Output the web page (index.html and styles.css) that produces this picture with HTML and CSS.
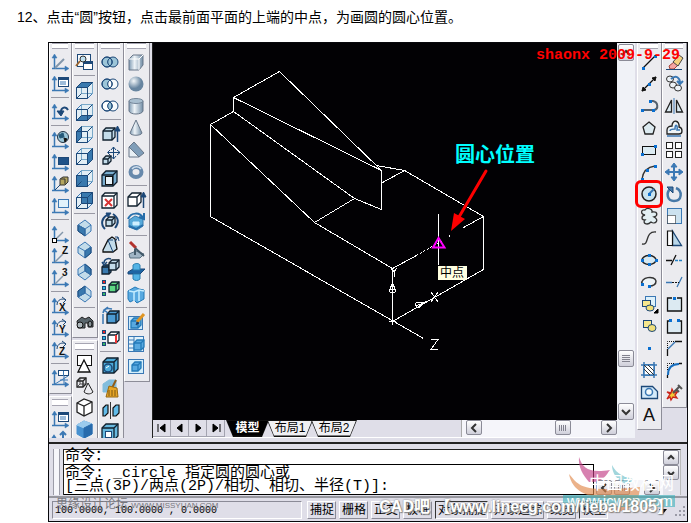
FILE: index.html
```html
<!DOCTYPE html>
<html lang="zh-CN">
<head>
<meta charset="utf-8">
<title>CAD 教程</title>
<link rel="stylesheet" href="styles.css">
</head>
<body>
<p class="step">12、点击“圆”按钮，点击最前面平面的上端的中点，为画圆的圆心位置。</p>
<main class="window">
  <div class="workspace">
    <div class="dock dock-left">
      <div class="dock-col" data-bars="ucs | ucsdialog"></div>
      <div class="dock-col" data-bars="views | shade"></div>
      <div class="dock-col" data-bars="solidedit"></div>
      <div class="dock-col" data-bars="solids"></div>
    </div>
    <div class="document">
      <svg class="drawing" viewBox="153 43 464 377" role="img" aria-label="三维模型">
        <g class="edges">
          <path d="M279.500 71.500L233.500 97.500V111.500L210.500 124.500V216.500L423.500 338.500M279.500 71.500L381.500 170.500L233.500 97.500M381.500 170.500V209.500L354.500 198.500L233.500 111.500M354.500 198.500L314.500 222.500M210.500 124.500L314.500 222.500L392.500 268.500V324.500M376.500 165.500L404.500 170.500L483.500 216.500V269.500L392.500 321.500M404.500 170.500L382.500 182.500M392.500 268.500L416.500 255.500M463.500 227.500L483.500 216.500"/>
          <path stroke-dasharray="2 2" d="M416.500 255.500L444.500 239.500"/>
          <path d="M438.500 214V265M449 235v2M391 268l3 4 3-4M394.500 272v5M431 292l7 10M438 292l-7 10M431 339.500h7l-7 10h7"/>
          <path d="M392.500 283l-3 7c0 4 6 4 6 0ZM390 289h6M425 302l-9 1c-2 4 3 6 5 3ZM416 306l7-3M389 321.500h7"/>
        </g>
        <path class="snap" d="M438.500 238L433 247.500H444.500Z"/>
        <path class="pointer" d="M486 171L459 217"/>
        <path class="pointer-head" d="M451 231L454 213L465 219Z"/>
        <text class="note" x="455" y="162">圆心位置</text>
        <rect class="tip" x="438" y="266" width="29" height="14"/>
        <text class="tip-text" x="440" y="277">中点</text>
      </svg>
      <div class="sheetbar">
        <div class="pager">
          <button aria-label="第一个"><svg viewBox="0 0 12 10"><path d="M2 1v8M9 1v8L4 5Z"/></svg></button>
          <button aria-label="上一个"><svg viewBox="0 0 12 10"><path d="M8 1v8L3 5Z"/></svg></button>
          <button aria-label="下一个"><svg viewBox="0 0 12 10"><path d="M4 1v8L9 5Z"/></svg></button>
          <button aria-label="最后一个"><svg viewBox="0 0 12 10"><path d="M10 1v8M3 1v8L8 5Z"/></svg></button>
        </div>
        <div class="tabs">
          <button class="tab active"><span>模型</span></button>
          <button class="tab"><span>布局1</span></button>
          <button class="tab"><span>布局2</span></button>
        </div>
        <div class="scroll-h">
          <button class="sb" aria-label="向左"><svg viewBox="0 0 10 10"><path d="M7 1L3 5l4 4"/></svg></button>
          <span class="track"></span>
          <button class="sb" aria-label="水平滑块"><svg viewBox="0 0 10 10"><path class="ridge" d="M1.500 2v6M3.500 2v6M5.500 2v6M7.500 2v6"/></svg></button>
          <span class="track track-end"></span>
          <button class="sb" aria-label="向右"><svg viewBox="0 0 10 10"><path d="M3 1l4 4-4 4"/></svg></button>
        </div>
      </div>
    </div>
    <div class="scroll-v">
      <button class="sb" aria-label="向上"><svg viewBox="0 0 10 10"><path d="M1 7l4-4 4 4"/></svg></button>
      <span class="track"></span>
      <button class="sb" aria-label="垂直滑块"><svg viewBox="0 0 10 10"><path class="ridge" d="M1 1.500h8M1 3.500h8M1 5.500h8M1 7.500h8"/></svg></button>
      <span class="track track-end"></span>
      <button class="sb" aria-label="向下"><svg viewBox="0 0 10 10"><path d="M1 3l4 4 4-4"/></svg></button>
    </div>
    <div class="dock dock-right">
      <div class="dock-col" data-bars="draw"></div>
      <div class="dock-col" data-bars="modify"></div>
    </div>
  </div>
  <section class="command">
    <div class="grip-v"></div>
    <div class="console">
      <div class="history">命令：</div>
      <textarea class="prompt" aria-label="命令行" spellcheck="false">命令: _circle 指定圆的圆心或
[三点(3P)/两点(2P)/相切、相切、半径(T)]:</textarea>
      <div class="scroll-h console-h">
        <button class="sb" aria-label="命令行向左"><svg viewBox="0 0 10 10"><path d="M7 1L3 5l4 4"/></svg></button>
        <button class="sb" aria-label="命令行滑块"><svg viewBox="0 0 10 10"><path class="ridge" d="M1.500 2v6M3.500 2v6M5.500 2v6M7.500 2v6"/></svg></button>
        <span class="track"></span>
        <button class="sb" aria-label="命令行向右"><svg viewBox="0 0 10 10"><path d="M3 1l4 4-4 4"/></svg></button>
      </div>
      <div class="console-v">
        <button class="sb" aria-label="命令行向上"><svg viewBox="0 0 10 10"><path d="M2 6l3-3 3 3"/></svg></button>
        <button class="sb" aria-label="命令行向下"><svg viewBox="0 0 10 10"><path d="M2 4l3 3 3-3"/></svg></button>
      </div>
    </div>
  </section>
  <footer class="status">
    <div class="coords">100.0000, 100.0000 , 0.0000</div>
    <button class="mode">捕捉</button>
    <button class="mode">栅格</button>
    <button class="mode">正交</button>
    <button class="mode">极轴</button>
    <button class="mode on">对象捕捉</button>
    <button class="mode">对象追踪</button>
    <button class="mode">线宽</button>
    <button class="mode on">模型</button>
    <svg class="corner" viewBox="0 0 28 20"><path d="M1 9h8l-4 5Z"/><path class="dots" d="M25 7h2M21 11h2M25 11h2M17 15h2M21 15h2M25 15h2"/></svg>
  </footer>
  <span class="stamp">shaonx 2009-9-29</span>
  <div class="mark-site">
    <svg viewBox="0 0 118 62">
      <path fill="#c23d86" fill-opacity=".65" d="M16 2C20 14 26 18 47 15C43 20 40 28 26 27C20 20 15 12 16 2Z"/>
      <path fill="#62bac4" fill-opacity=".6" d="M49 10C54 20 61 21 70 24C68 29 65 30 61 28C54 25 49 18 49 10Z"/>
      <path fill="#e0894c" fill-opacity=".65" d="M6 19C16 30 16 38 77 32C76 48 70 56 45 58C58 51 62 46 42 43C24 42 9 36 6 19Z"/>
      <path fill="#3bb2ba" fill-opacity=".6" d="M0 40H112V52H0Z"/>
      <text class="mark-cn" x="26" y="34">中国教程网</text>
      <text class="mark-url" x="4" y="51">www.jcwcn.com</text>
    </svg>
  </div>
  <span class="mark-forum">思缘设计论坛 <small>WWW.MISSYUAN.COM</small></span>
  <span class="mark-bar">CAD吧 【www.linecg.com/tieba/1805】</span>
</main>
<script src="toolbars.js"></script>
</body>
</html>
```
FILE: styles.css
```css
* { box-sizing: border-box; }
body {
  margin: 0;
  background: #fff;
  color: #000;
  font: 12px "Liberation Sans", "Noto Sans CJK SC", sans-serif;
}
button {
  font: inherit;
  color: inherit;
  padding: 0;
  border: 0;
  background: none;
}
svg { display: block; }
.step {
  margin: 0;
  padding: 8px 17px 16px;
  font-size: 14px;
  line-height: 18px;
}
.window {
  position: relative;
  margin: 0 3px 0 48px;
  border: 1px solid #08080c;
  background: #dfdee8;
}
.workspace { display: flex; }

/* docked toolbars */
.dock { display: flex; }
.dock-left { padding-right: 2px; border-right: 1px solid #222; }
.dock-right { padding-left: 2px; }
.dock-col {
  width: 26px;
  height: 0;
  min-height: 100%;
  overflow: hidden;
}
.dock-left .dock-col:first-child { width: 23px; }
.dock-right .dock-col { width: 25px; overflow: visible; }
.toolbar {
  padding: 0 1px 4px 0;
  border: solid;
  border-width: 0 1px 1px;
  border-color: #fff #8d8d98 #8d8d98 #fff;
  background: #ebebef;
}
.toolbar + .toolbar { margin-top: 2px; border-top-width: 1px; }
.toolbar::before {
  content: "";
  display: block;
  height: 4px;
  margin: 0 2px 2px;
  border: solid #a6a5b2;
  border-width: 1px 0;
  background: #fff;
}
.toolbar + .toolbar::before { margin: 2px 2px; height: 5px; }
.tool {
  position: relative;
  display: block;
  width: 22px;
  height: 22px;
}
.dock-col:first-child .tool { margin-left: -1px; }
.dock-right .dock-col:first-child .tool { margin-left: 0; }
.tool svg { width: 22px; height: 22px; }
.tool.marked::after {
  content: "";
  position: absolute;
  inset: -3px;
  border: 3px solid #f00;
  border-radius: 6px;
}
.rule {
  height: 1px;
  margin: 2px 1px 3px;
  border: 0;
  background: #9999a4;
}

/* model view */
.document { flex: 1; min-width: 0; }
.drawing { width: 100%; background: #020104; }
.edges { fill: none; stroke: #fff; shape-rendering: crispEdges; }
.snap { fill: none; stroke: #f0f; stroke-width: 2; }
.pointer { stroke: #f00; stroke-width: 3; stroke-linecap: round; }
.pointer-head { fill: #f00; }
.note { fill: #0ff; font-size: 20px; font-weight: bold; }
.tip { fill: #ffffe1; }
.tip-text { font-size: 12px; }
.sheetbar {
  display: flex;
  height: 18px;
  border-bottom: 1px solid #fff;
}
.pager { display: flex; }
.pager button {
  width: 18px;
  border-right: 1px solid #a3a3af;
  border-bottom: 1px solid #a3a3af;
}
.pager svg { width: 12px; height: 10px; margin: 0 auto; stroke: #000; }
.tabs { display: flex; flex: 1; padding-left: 1px; }
.tab {
  width: 46px;
  margin-right: -2px;
  background: #111;
  line-height: 15px;
  clip-path: polygon(0 0, 100% 0, calc(100% - 7px) 100%, 7px 100%);
}
.tab span {
  display: block;
  height: 15px;
  margin: 0 1px 1px;
  background: #f0f0f3;
  clip-path: polygon(0 0, 100% 0, calc(100% - 6px) 100%, 6px 100%);
}
.tab.active { width: 43px; color: #fff; font-weight: bold; }
.tab.active span { background: #000; }

/* scroll bars */
.sb {
  display: grid;
  place-items: center;
  flex: none;
  width: 16px;
  height: 15px;
  border: 1px solid #8b8b97;
  border-radius: 2px;
  background: linear-gradient(#fff, #cfcfda);
}
.sb svg { width: 10px; height: 10px; fill: none; stroke: #333; stroke-width: 2; }
.sb .ridge { stroke: #82828e; stroke-width: 1; }
.track { flex: 1; }
.scroll-h { display: flex; background: #f5f5fa; }
.sheetbar .scroll-h { width: 156px; padding-left: 4px; border-left: 1px solid #aaa; }
.sheetbar .track-end { flex: none; width: 30px; }
.scroll-v {
  display: flex;
  flex-direction: column;
  width: 18px;
  padding: 1px 1px 18px;
  background: #f0f2f7;
}
.scroll-v .sb { height: 17px; }
.scroll-v .track-end { flex: none; height: 36px; }

/* command line */
.command {
  display: flex;
  gap: 3px;
  margin-top: 4px;
  padding: 5px 6px 1px 4px;
  border-top: 2px solid #222;
  border-bottom: 2px solid #96969e;
}
.grip-v {
  width: 7px;
  border: solid #9c9ca8;
  border-width: 0 1px;
  background: #f6f6fa;
}
.console {
  flex: 1;
  display: grid;
  grid-template-columns: 1fr 69px 17px;
  grid-template-rows: 15px 30px;
  border: 1px solid #222;
  border-right-color: #bbb;
  border-bottom: 0;
  background: #fff;
  font: 15px/14px "Liberation Mono", "Noto Sans CJK SC", monospace;
}
.history, .prompt {
  grid-column: 1;
  padding: 0 1px;
  border: 0 solid #000;
  border-bottom-width: 1px;
}
.prompt {
  display: block;
  width: 100%;
  height: 30px;
  margin: 0;
  padding-top: 2px;
  border-right-width: 1px;
  border-radius: 0;
  overflow: hidden;
  resize: none;
  outline: 0;
  background: #fff;
  color: #000;
  font: 15px/13px "Liberation Mono", "Noto Sans CJK SC", monospace;
}
.console-h { grid-column: 2; grid-row: 2; align-self: end; padding: 0 3px 0 2px; gap: 2px; }
.console-v { grid-column: 3; grid-row: 1 / 3; background: #e4e4ec; }

/* status bar */
.status {
  display: flex;
  align-items: center;
  gap: 3px;
  height: 23px;
  padding: 0 1px 0 3px;
}
.coords {
  flex: 0 0 250px;
  height: 18px;
  margin-right: 2px;
  padding: 0 2px;
  border: 1px solid;
  border-color: #8b8b97 #fff #fff #8b8b97;
  font: 10px/18px "Liberation Mono", monospace;
}
.mode {
  height: 18px;
  padding: 0 1px 0 2px;
  border: 1px solid;
  border-color: #fff #8b8b97 #8b8b97 #fff;
  line-height: 16px;
  white-space: nowrap;
}
.mode.on { border-color: #333 #fff #fff #333; }
.corner { width: 28px; height: 20px; margin-left: auto; }
.dots { stroke: #9a9aa6; stroke-width: 2; }

/* stamps laid over the window */
.stamp, .mark-site, .mark-forum, .mark-bar {
  position: absolute;
  pointer-events: none;
  white-space: nowrap;
}
.stamp {
  top: 4px;
  right: 7px;
  color: #f00;
  font: bold 15px/18px "Liberation Mono", monospace;
}
.mark-site { right: 6px; bottom: 4px; }
.mark-site svg { width: 118px; height: 62px; overflow: visible; }
.mark-cn { fill: #fff; font-size: 17px; }
.mark-url { fill: #fff; font-size: 15px; }
.mark-forum {
  left: 7px;
  bottom: 6px;
  color: #77777d;
  font-size: 12px;
  line-height: 18px;
}
.mark-forum small { font-size: 8px; }
.mark-bar {
  right: 14px;
  bottom: 4px;
  color: #fff;
  font-size: 16px;
  font-weight: bold;
  line-height: 20px;
  text-shadow: 0 0 2px #777, 1px 1px 1px #888;
}
```
FILE: toolbars.js
```js
// Icon fragments are drawn on a 22 x 22 grid.
const NAVY = '#1c4878', BLUE = '#3b78b4', PALE = '#c3dcea', SKY = '#58a9e0';

const p = (d, fill = 'none', stroke = NAVY, w = 1) =>
  `<path d="${d}" fill="${fill}" stroke="${stroke}" stroke-width="${w}"/>`;
const sq = (x, y, w, h, fill = '#fff', stroke = NAVY) =>
  `<rect x="${x}" y="${y}" width="${w}" height="${h}" fill="${fill}" stroke="${stroke}"/>`;
const dot = (x, y) => `<rect x="${x - 1}" y="${y - 1}" width="3" height="3" fill="#0a6fd0"/>`;
const ring = (x, y, rx, ry, fill = 'none', stroke = NAVY, w = 1) =>
  `<ellipse cx="${x}" cy="${y}" rx="${rx}" ry="${ry}" fill="${fill}" stroke="${stroke}" stroke-width="${w}"/>`;
const word = (x, y, s, size = 10, fill = '#111') =>
  `<text x="${x}" y="${y}" font-size="${size}" font-weight="bold" fill="${fill}">${s}</text>`;

const axes = p('M5.5 18V5M3 17.500H17', 'none', BLUE, 1.5) +
  p('M3 7L5.500 3L8 7ZM16 15L20 17.500L16 20Z', BLUE, BLUE, .5);
const ucs = extra => axes + extra;
const turn = s => ucs(p('M8 10C8 4 14 3 17 5M13 2l4 3-3 3') + word(10, 16, s));

const faces = {
  top: 'M3.500 8.500l5-5h11l-5 5Z', bottom: 'M3.500 19.500l5-5h11l-5 5Z',
  left: 'M3.500 8.500l5-5v11l-5 5Z', right: 'M14.500 8.500l5-5v11l-5 5Z',
  front: 'M3.500 8.500h11v11h-11Z', back: 'M8.500 3.500h11v11h-11Z'
};
const view = side => p('M3.500 8.500l5-5h11v11l-5 5h-11Z', '#e2eef5', BLUE) +
  p(faces.back, 'none', '#79a9c9') + p(faces[side], '#3979ae') +
  p('M3.500 8.500h11v11h-11ZM14.500 8.500l5-5M3.500 19.500l5-5');
const isoFaces = ['M5 8l7 4v7l-7-5Z', 'M12 12l6-4v6l-6 5Z', 'M12 3l6 5v6l-6-4Z', 'M5 8l7-5v7l-7 4Z'];
const iso = n => p('M12 3l6 5v6l-6 5l-7-5V8Z', PALE, BLUE) + p(isoFaces[n], '#3979ae') +
  p(n < 2 ? 'M5 8l7 4l6-4M12 12v7' : 'M5 14l7-4l6 4M12 3v7', 'none', BLUE);
const box = (x, y, s, d, fill = PALE, ink = '#10202e') =>
  p(`M${x} ${y}l${d}-${d}h${s}v${s}l-${d} ${d}h-${s}Z`, fill, ink, 1.3) +
  p(`M${x} ${y}h${s}v${s}M${x + s} ${y}l${d}-${d}`, 'none', ink, 1.3);
const blueCube = p('M4 7l7-4l8 3v10l-8 4l-7-4Z', SKY, '#247ab8') +
  p('M11 10l8-4v10l-8 4Z', '#287dbe', '#287dbe') + p('M4 7l7 3l8-4M11 10v10', 'none', '#a7dcf8');
const hex = fill => p('M4 7l7-4l8 3v10l-8 4l-7-4Z', fill, '#222', 1.3) + p('M4 7l7 3l8-4M11 10v10', 'none', '#222', 1.3);
const rings = mode => ring(8, 11, 5, 5, mode < 2 ? '#9cc5d8' : '#fff') +
  ring(14, 11, 5, 5, mode === 0 ? '#9cc5d8' : '#f7fafc') +
  p('M11 7c3 2 3 6 0 8c-3-2-3-6 0-8Z', mode === 1 ? '#fff' : '#9cc5d8') + ring(8, 11, 5, 5);
const solid = d => p(d, 'url(#metal)', '#687789');

const icons = {
  ucs: ucs(p('M6 17L15 8', 'none', '#8296aa', 2)),
  ucsbox: ucs(sq(9.5, 4.5, 10, 9) + p('M9 6h11', 'none', NAVY, 2) + p('M11 9h6M11 11h6', 'none', BLUE)),
  ucsprev: ucs(p('M9 11h3c0-5 5-6 7-2', 'none', NAVY, 2) + p('M8 10h7l-3 5Z', NAVY)),
  ucsworld: ucs(ring(14, 8, 5.5, 5.5, '#9bc6d9', '#234') + p('M10 6l4-2l1 4l-4 1Z', '#245878', '#245878') + p('M15 9l3 1l-2 3Z', '#111', '#111')),
  ucsobj: ucs(sq(9.5, 6.5, 10, 7, '#1f5288')),
  ucsface: ucs(p('M6 17l6-6', 'none', NAVY) + p('M11 6l3-2h5v5l-3 3h-5Z', '#b4a55e', '#333') + p('M12 6h4v5', 'none', '#333')),
  ucsview: ucs(sq(9.5, 4.5, 10, 8, '#e2f2fb', BLUE)),
  ucsorigin: ucs(p('M6 17l8-8', 'none', '#8296aa', 1.5) + sq(3.5, 15.5, 4, 4, '#fff', '#000')),
  ucsz: ucs(p('M6 17l8-8', 'none', '#8296aa', 1.5) + word(13, 9, 'Z')),
  ucs3: ucs(p('M6 17l8-8', 'none', '#8296aa', 1.5) + word(13, 9, '3')),
  rotx: turn('X'), roty: turn('Y'), rotz: turn('Z'),
  ucsapply: ucs(sq(9.5, 3.5, 10, 5) + p('M14.500 4v5M6 17L19 9M11 13h8M15 9v8', 'none', BLUE)),
  ucspan: p('M5 18V7M3 9l2-3 2 3M14 3v12M8 9h12M11 5l3-3 3 3M11 13l3 3 3-3', 'none', BLUE, 2),

  named: sq(4.5, 3.5, 13, 12, '#f5f9fb') + sq(10.5, 10.5, 9, 8, '#fff') + p('M10 12h10', 'none', NAVY, 2) + ring(10, 8, 3, 3, '#bfe0ef', '#333') + p('M7 10l-4 5', 'none', '#9a642f', 2),
  vtop: view('top'), vbottom: view('bottom'), vleft: view('left'), vright: view('right'), vfront: view('front'), vback: view('back'),
  sw: iso(0), se: iso(1), ne: iso(2), nw: iso(3),
  camera: p('M4 10l5-4l3 2l4-2l4 4v6h-5v-4h-3v5H5Z', '#59666c', '#222') + ring(7, 14, 3, 3, '#aeb8bc', '#111') + ring(17, 13, 2, 3, '#879296', '#111'),
  wire2: sq(4.5, 3.5, 14, 10, '#fff', '#111') + p('M11 8l6 12H5Z', '#fff', '#111', 1.3),
  wire3: box(4, 7, 6, 3, 'none', '#222') + p('M15 9l5 9c-3 3-7 2-9 0Z', 'none', '#222') + p('M4 13l3-3h6M7 4v6', 'none', '#333', .8),
  hidden: hex('#fff'),
  flat: p('M4 7l7-4l8 3v10l-8 4l-7-4Z', '#4791d0', '#4791d0') + p('M4 7l7-4l8 3l-8 4Z', '#9bcbed', '#9bcbed') + p('M11 10l8-4v10l-8 4Z', '#286bac', '#286bac'),

  union: rings(0), subtract: rings(1), intersect: rings(2),
  extrudef: box(4, 8, 9, 3) + p('M18.500 19V6', 'none', NAVY, 1.5) + p('M16 8l2.500-5L21 8Z', NAVY),
  movef: box(4, 14, 5, 3) + p('M14.500 2v12M9 7.500h12M12 5l2.500-3 2.500 3M12 11l2.500 3 2.500-3M11 5L8.500 7.500 11 10M18 5l3 2.500-3 2.500', 'none', NAVY),
  offsetf: box(3, 8, 11, 4, '#79aed0') + sq(6.5, 9.5, 7, 8, '#e8f3f9', '#111'),
  deletef: box(3, 7, 12, 3, '#fff') + p('M6 10l7 7M13 10l-7 7', 'none', '#d83434', 2),
  rotatef: box(7, 9, 6, 3) + p('M6 18C1 13 3 7 8 4M14 3c6 4 6 9 2 14', 'none', NAVY, 2) + p('M7 2h5l-3 4Z', NAVY),
  taperf: p('M4 17l5-10l4-3l3 2l2 10l-4 3H4Z', PALE, '#111', 1.3) + p('M9 7l5 12M9 7h5M16 9l3-5M16 4h3l1 4', 'none', NAVY),
  copyf: box(3, 12, 7, 2, '#3979ae') + box(10, 8, 7, 3) + p('M5 8c0-4 4-5 7-4M3 7l2 3 3-3', 'none', NAVY, 1.5),
  colorf: sq(3.5, 3.5, 3, 3, '#e22') + sq(3.5, 9.5, 3, 3, '#27b4db') + sq(3.5, 15.5, 3, 3, '#34b864') + box(10, 8, 7, 3, '#5dd884'),
  copye: box(8, 9, 9, 3, '#4c9bd3') + p('M4 9v10M4 8C5 3 9 3 13 4M9 2L5 5l4 3', 'none', BLUE, 1.5),
  colore: sq(3.5, 3.5, 3, 3, '#e22') + sq(3.5, 9.5, 3, 3, '#27b4db') + sq(3.5, 15.5, 3, 3, '#34b864') + box(9, 8, 8, 3, '#fff') + p('M17 8v8', 'none', '#e33', 2),
  imprint: box(4, 7, 11, 4, '#4caad9') + ring(9, 13, 4, 4, 'none', NAVY, 1.5) + p('M7 13l3-2', 'none', '#fff'),
  clean: p('M4 7l6-4h7v12H4Z', '#82bddd', '#82bddd') + p('M17 3l-4 8', 'none', '#925c16', 2) + p('M10 9l8 2l1 9H7Z', '#e6a526', '#986812') + p('M10 13v6M13 13v6M16 13v6', 'none', '#7b5712'),
  separate: p('M4 9l3-3h2v8l-3 3h-2ZM14 9l3-3h3v8l-3 3h-3Z', '#62bce9', '#111', 1.2) + p('M11.500 3v17', 'none', '#333'),
  shell: box(3, 7, 12, 4, '#68b9df') + sq(6.5, 10.5, 6, 6, '#fff'),

  cube: solid('M4 8l4-4h10v10l-4 5H4Z') + p('M4 8h10v11M14 8l4-4', 'none', '#fff'),
  sphere: '<circle cx="11" cy="11" r="7.500" fill="url(#ball)"/>',
  cylinder: solid('M4 6v10c1 4 13 4 14 0V6Z') + ring(11, 6, 7, 2.5, '#a9bfd0', '#76889b'),
  cone: solid('M11 3L5 16c1 3 11 3 12 0Z'),
  wedge: p('M4 8l5-5l10 11l-5 4Z', '#7f9db8', '#687789') + p('M4 8v10h10Z', '#e8eff4', '#687789'),
  torus: ring(11, 11, 5.5, 5, 'none', '#6789ac', 4) + p('M7 8c2-3 7-3 9 0', 'none', '#cfdeec', 1.5),
  extrude: box(3, 8, 9, 4, '#fff') + p('M18.500 19V6', 'none', NAVY, 1.5) + p('M16 8l2.500-5L21 8Z', NAVY),
  revolve: p('M4 9l6-4l8 3v7l-6 4l-8-3Z', '#58aada', '#387cae') + p('M3 8c3-7 12-7 15-1M14 6l5 2 0-6M4 15l7 3 7-4', 'none', '#276fab', 2) + p('M8 11h6v3H8Z', '#cfefff', '#cfefff'),
  slice: p('M4 15l7-3l8 3l-4 4H5Z', '#a0b5c5', '#587080') + p('M5 3l6 6', 'none', '#b3322d', 3) + p('M10 9l9 8M10 10v6', 'none', '#435a6a', 2),
  section: p('M3 11l5-3h12l-5 5H3Z', '#1d65a4') + p('M8 4c2-2 6-2 7 0v5H8ZM8 13h7v5c-2 2-5 2-7 0Z', '#53b3e5', '#297dae'),
  interfere: p('M3 8l7-4l4 2l5 1v9l-7 4l-3-3l-4 2l-2-3Z', SKY, '#237ab8') + p('M9 9v9M14 8v10M4 8l5 1l5-2l5 1', 'none', '#c4edff', 1.5),
  setupd: sq(3.5, 5.5, 14, 13, '#cdeafa', BLUE) + box(6, 10, 7, 3, SKY, '#237ab8') + p('M19 3l-7 8', 'none', '#e09523', 3) + p('M12 11l-1 3l3-2Z', '#222'),
  setupv: sq(3.5, 3.5, 15, 15, '#e3f3fb', BLUE) + p('M4 7h5M4 11h5M4 15h5M9 4v14', 'none', BLUE) + box(9, 10, 7, 3, SKY, '#237ab8'),
  setupp: sq(3.5, 4.5, 15, 14, '#d4effb', BLUE) + box(7, 10, 6, 3, SKY, '#237ab8'),

  line: p('M5 17L17 5', 'none', '#111', 1.3) + dot(5, 17) + dot(17, 5),
  xline: p('M4 18L18 4', 'none', '#111', 1.3) + p('M4 18l1-4 3 3ZM18 4l-1 4-3-3Z', '#111', '#111') + dot(11, 11),
  pline: p('M4 15h12c5-1 4-8-1-9h-3', 'none', '#54606d', 2) + dot(4, 15) + dot(15, 15) + dot(12, 6),
  polygon: p('M11 5l6 5l-2 7H7L5 10Z', '#dceaf0', '#222', 1.3),
  rect: sq(4.5, 7.5, 13, 8, '#dcebf2', '#111') + dot(4, 15) + dot(17, 7),
  arc: p('M4 18C5 10 10 6 17 5', 'none', '#333', 1.3) + dot(4, 18) + dot(9, 9) + dot(17, 5),
  circle: ring(11, 11, 7, 7, '#c8e3ef', '#222', 1.5) + p('M11 11l5-5', 'none', BLUE, 2) + dot(11, 11),
  cloud: p('M7 10C2 9 3 4 7 5C9 2 15 4 14 7C20 6 20 11 16 12C22 15 17 20 13 17C9 21 4 18 7 15C3 15 3 11 7 10Z', '#e3eff3', '#333', 1.3),
  spline: p('M4 17C12 19 6 4 18 5', 'none', '#333', 1.3),
  ellipse: ring(11, 11, 7, 4.5, '#d6e8f1', '#222', 1.5) + dot(4, 11) + dot(18, 11) + dot(11, 6) + dot(11, 15),
  earc: p('M4 13C2 6 17 4 18 10c0 4-4 5-7 5', '#edf3f6', '#333', 1.5) + dot(4, 13) + dot(11, 15),
  insert: sq(7.5, 3.5, 10, 10, '#ddf1fb', BLUE) + sq(4.5, 7.5, 8, 6, '#f6e78d') + ring(12, 15, 4, 3, '#f1df78') + p('M20 16v4h-4Z', '#000', '#000'),
  block: sq(5.5, 5.5, 8, 7, '#f6e78d') + ring(14, 13, 4, 3.5, '#f1df78'),
  point: dot(11, 11),
  hatch: sq(5.5, 5.5, 11, 11, '#fff', BLUE) + p('M3 6h16M3 16h16M6 3v16M16 3v16', 'none', BLUE, 1.5) + p('M6 10l6 6M6 6l10 10M10 6l6 6', 'none', '#333'),
  region: p('M3.500 5.500h11l5 5v7h-16Z', '#d4eafa', NAVY, 1.3) + ring(11, 11, 3.5, 3.5, '#f4fafc', BLUE, 1.5),
  mtext: '<text x="5" y="18" font-size="18" fill="#111">A</text>',

  erase: p('M6 15l5-4l4 3l-4 4H7Z', '#f6a5a2', '#a34236') + p('M10 11l6-7l4 3l-5 8Z', '#f5d17e', '#444') + p('M3 18.500h16', 'none', NAVY),
  copy: ring(7, 6, 3.5, 3, '#eef3f7', '#333') + ring(10, 12, 3.5, 3, '#eef3f7', '#333') + ring(15, 15, 3.5, 3, '#eef3f7', '#333') + p('M8 6c5-5 9-1 9 4M14 8l3 3 3-3', 'none', BLUE, 2),
  mirror: p('M8.500 5v12h-6ZM13.500 5v12h6Z', '#dcecf4', '#222', 1.3) + p('M11 3v16', 'none', BLUE),
  offset: p('M4 17V13c0-3 3-4 5-4C9 2 17 3 16 10c4 1 4 7 0 7Z', '#eef4f7', '#222', 1.3) + p('M7 14c0-2 2-2 5-2c0-6 3-4 2 1h3M4 19h14', 'none', BLUE, 1.5),
  array: sq(3.5, 3.5, 6, 6, '#fff', '#222') + sq(12.5, 3.5, 6, 6, '#fff', '#222') + sq(3.5, 12.5, 6, 6, '#fff', '#222') + sq(12.5, 12.5, 6, 6, '#fff', '#222'),
  move: p('M11 4v14M4 11h14', 'none', BLUE, 2) + p('M8 6l3-4 3 4ZM8 16l3 4 3-4ZM6 8l-4 3 4 3ZM16 8l4 3-4 3Z', BLUE, BLUE),
  rotate: p('M7 6C3 10 4 18 11 18C19 18 20 8 13 5', 'none', '#4779a8', 2.5) + p('M4 4h6v6Z', '#4779a8'),
  scale: sq(4.5, 3.5, 14, 15, '#cce2ef', BLUE) + '<rect x="4.500" y="10.500" width="8" height="8" fill="#fff" stroke="#111" stroke-dasharray="1 1"/>',
  stretch: p('M9.500 4v14.500h9Z', '#b9d6e8', NAVY, 1.3) + p('M4.500 4v14.500h5V4Z', '#fff', '#111', 1.2),
  trim: p('M3 11.500h6M8 16l5-10', 'none', '#111', 1.3) + '<path d="M12 11.500h8" stroke="#2782c4" stroke-width="1.500" stroke-dasharray="3 1"/>',
  extend: p('M3 11.500h6M14 16l5-10', 'none', BLUE, 1.3) + '<path d="M9 11.500h7" stroke="#111" stroke-dasharray="2 1"/>',
  breakat: p('M9 5H4.500v13h14V5H14', '#dceaf2', '#111', 1.3) + dot(11, 5),
  breakgap: p('M6 6H4.500v12h14V6H17', '#dceaf2', '#111', 1.3) + dot(7, 5) + dot(15, 5),
  chamfer: p('M4.500 19V12M12 4.500h7', 'none', '#111', 1.3) + p('M5 12l7-7', 'none', BLUE, 1.5) + '<path d="M4.500 11V4.500H11" fill="none" stroke="#111" stroke-dasharray="1 1"/>',
  fillet: p('M4.500 19v-3M16 4.500h3', 'none', '#111', 1.3) + p('M5 16C5 9 9 5 16 5', 'none', '#176dbd', 2) + '<path d="M4.500 11V4.500H11" fill="none" stroke="#111" stroke-dasharray="1 1"/>',
  explode: p('M4 18l3-5-3-2 4 1 1-4 2 4 4-2-3 4 2 3-4-1-2 3-1-3Z', '#f2ca35', '#c92119', 1.3) + p('M10 12l7-7M15 4l4 4M13 8l3 3', 'none', '#555', 2)
};

// "-" draws a separator.
const bars = {
  ucs: 'ucs ucsbox - ucsprev - ucsworld ucsobj ucsface ucsview - ucsorigin ucsz ucs3 - rotx roty rotz - ucsapply',
  ucsdialog: 'ucsbox ucspan',
  views: 'named - vtop vbottom vleft vright vfront vback - sw se ne nw - camera',
  shade: 'wire2 wire3 hidden flat',
  solidedit: 'union subtract intersect - extrudef movef offsetf deletef rotatef taperf copyf colorf - copye colore - imprint clean separate shell',
  solids: 'cube sphere cylinder cone wedge torus - extrude revolve - slice section interfere - setupd setupv setupp',
  draw: 'line xline pline polygon rect arc circle cloud spline ellipse earc insert block point hatch region mtext',
  modify: 'erase copy mirror offset array move rotate scale stretch trim extend breakat breakgap chamfer fillet explode'
};

const shades = `<svg width="0" height="0" style="position:absolute"><defs>
<linearGradient id="metal"><stop stop-color="#7f9bb3"/><stop offset=".4" stop-color="#eef4f8"/><stop offset="1" stop-color="#718da6"/></linearGradient>
<radialGradient id="ball" cx=".35" cy=".3"><stop stop-color="#f4f8fa"/><stop offset="1" stop-color="#6785a0"/></radialGradient>
</defs></svg>`;
document.body.insertAdjacentHTML('beforeend', shades);

const button = name => name === '-' ? '<hr class="rule">' :
  `<button class="tool${name === 'circle' ? ' marked' : ''}" aria-label="${name}"><svg viewBox="0 0 22 22">${icons[name]}</svg></button>`;

document.querySelectorAll('.dock-col').forEach(col => {
  col.innerHTML = col.dataset.bars.split(' | ').map(bar =>
    `<div class="toolbar" role="toolbar" aria-label="${bar}">${bars[bar].split(' ').map(button).join('')}</div>`
  ).join('');
});
```
